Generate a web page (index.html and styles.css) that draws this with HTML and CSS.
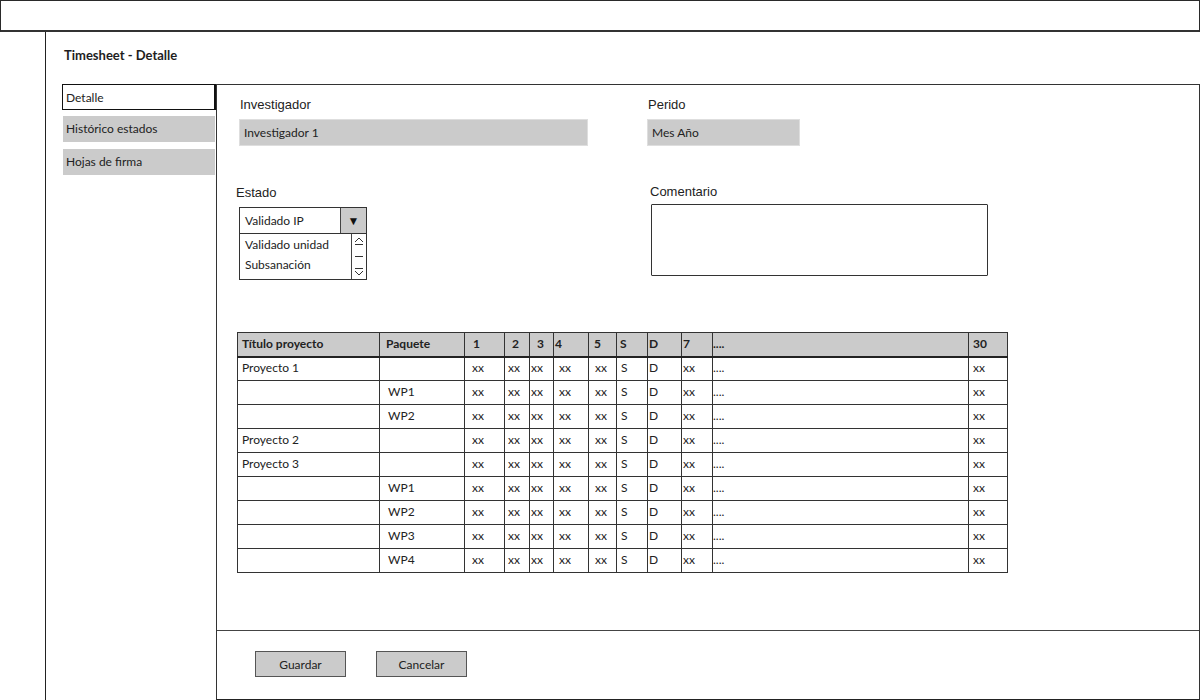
FILE: index.html
```html
<!DOCTYPE html>
<html lang="es">
<head>
<meta charset="utf-8">
<title>Timesheet - Detalle</title>
<link rel="stylesheet" href="styles.css">
</head>
<body>
<header class="topbar"></header>
<div class="page">
  <aside class="rail"></aside>
  <main class="content">
    <h1 class="title">Timesheet - Detalle</h1>
    <div class="workspace">
      <nav class="tabs">
        <div class="tab tab-active">Detalle</div>
        <div class="tab tab-second">Histórico estados</div>
        <div class="tab tab-third">Hojas de firma</div>
      </nav>
      <section class="panel">
        <div class="panel-body">
          <div class="form">
            <div class="field field-inv">
              <label class="lbl">Investigador</label>
              <div class="input input-inv">Investigador 1</div>
            </div>
            <div class="field field-per">
              <label class="lbl">Perido</label>
              <div class="input input-per">Mes Año</div>
            </div>
            <div class="field field-est">
              <label class="lbl lbl-est">Estado</label>
              <div class="combo">
                <div class="combo-head">
                  <span class="combo-value">Validado IP</span>
                  <span class="combo-btn">&#9660;</span>
                </div>
                <div class="combo-list">
                  <div class="combo-items">
                    <div class="combo-item">Validado unidad</div>
                    <div class="combo-item">Subsanación</div>
                  </div>
                  <div class="combo-scroll">
                    <svg width="14" height="44" viewBox="0 0 14 44">
                      <path d="M3 8 L7 4 L11 8" fill="none" stroke="#333" stroke-width="1"/>
                      <path d="M3 10.5 H11" stroke="#333" stroke-width="1"/>
                      <path d="M3 22.5 H11" stroke="#333" stroke-width="1"/>
                      <path d="M3 34.5 H11" stroke="#333" stroke-width="1"/>
                      <path d="M3 37 L7 41 L11 37" fill="none" stroke="#333" stroke-width="1"/>
                    </svg>
                  </div>
                </div>
              </div>
            </div>
            <div class="field field-com">
              <label class="lbl lbl-com">Comentario</label>
              <div class="textarea"></div>
            </div>
          </div>
          <table class="grid">
            <thead>
              <tr><th>Título proyecto</th><th>Paquete</th><th>1</th><th>2</th><th>3</th><th>4</th><th>5</th><th>S</th><th>D</th><th>7</th><th>....</th><th>30</th></tr>
            </thead>
            <tbody>
              <tr><td>Proyecto 1</td><td></td><td>xx</td><td>xx</td><td>xx</td><td>xx</td><td>xx</td><td>S</td><td>D</td><td>xx</td><td>....</td><td>xx</td></tr>
              <tr><td></td><td>WP1</td><td>xx</td><td>xx</td><td>xx</td><td>xx</td><td>xx</td><td>S</td><td>D</td><td>xx</td><td>....</td><td>xx</td></tr>
              <tr><td></td><td>WP2</td><td>xx</td><td>xx</td><td>xx</td><td>xx</td><td>xx</td><td>S</td><td>D</td><td>xx</td><td>....</td><td>xx</td></tr>
              <tr><td>Proyecto 2</td><td></td><td>xx</td><td>xx</td><td>xx</td><td>xx</td><td>xx</td><td>S</td><td>D</td><td>xx</td><td>....</td><td>xx</td></tr>
              <tr><td>Proyecto 3</td><td></td><td>xx</td><td>xx</td><td>xx</td><td>xx</td><td>xx</td><td>S</td><td>D</td><td>xx</td><td>....</td><td>xx</td></tr>
              <tr><td></td><td>WP1</td><td>xx</td><td>xx</td><td>xx</td><td>xx</td><td>xx</td><td>S</td><td>D</td><td>xx</td><td>....</td><td>xx</td></tr>
              <tr><td></td><td>WP2</td><td>xx</td><td>xx</td><td>xx</td><td>xx</td><td>xx</td><td>S</td><td>D</td><td>xx</td><td>....</td><td>xx</td></tr>
              <tr><td></td><td>WP3</td><td>xx</td><td>xx</td><td>xx</td><td>xx</td><td>xx</td><td>S</td><td>D</td><td>xx</td><td>....</td><td>xx</td></tr>
              <tr><td></td><td>WP4</td><td>xx</td><td>xx</td><td>xx</td><td>xx</td><td>xx</td><td>S</td><td>D</td><td>xx</td><td>....</td><td>xx</td></tr>
            </tbody>
          </table>
        </div>
        <footer class="panel-footer">
          <button class="btn" type="button">Guardar</button>
          <button class="btn" type="button">Cancelar</button>
        </footer>
      </section>
    </div>
  </main>
</div>
</body>
</html>
```
FILE: styles.css
```css
* { box-sizing: border-box; }
html, body { margin: 0; padding: 0; }
body {
  width: 1200px;
  height: 700px;
  overflow: hidden;
  background: #fff;
  color: #222;
  font-family: Lato, "Liberation Sans", sans-serif;
}

.topbar {
  height: 32px;
  border: 1px solid #2a2a2a;
  border-bottom: 2px solid #333;
}

.page {
  display: flex;
  height: 668px;
}

.rail {
  width: 46px;
  flex: none;
  border-right: 1px solid #222;
}

.content {
  flex: 1;
  display: flex;
  flex-direction: column;
  padding-top: 15px;
}

.title {
  margin: 0 0 21px 18px;
  font-size: 13px;
  line-height: 16px;
  font-weight: 700;
  color: #1e1e1e;
}

.workspace {
  flex: 1;
  display: flex;
  margin-left: 16px;
}

.tabs {
  width: 154px;
  flex: none;
  display: flex;
  flex-direction: column;
}

.tab {
  height: 26px;
  font-size: 12px;
  line-height: 25px;
  padding-left: 3px;
  flex: none;
}
.tab-active {
  border: 1px solid #111;
  border-right: 2px solid #111;
  background: #fff;
}
.tab-second,
.tab-third {
  background: #cbcbcb;
  margin-left: 1px;
  width: 152px;
  padding-left: 3px;
  line-height: 26px;
}
.tab-second { margin-top: 6px; }
.tab-third { margin-top: 7px; }

.panel {
  flex: 1;
  display: flex;
  flex-direction: column;
  border: 1px solid #333;
  border-bottom: 1px solid #222;
}

.panel-body {
  flex: 1;
  padding: 0 0 0 20px;
}

.form {
  display: grid;
  grid-template-columns: 408px 1fr;
  grid-template-rows: 61px auto;
  padding-top: 12px;
  padding-left: 2px;
}

.field {
  display: flex;
  flex-direction: column;
  align-items: flex-start;
}
.field > * { flex: none; }

.lbl {
  font-family: "Liberation Sans", Arial, sans-serif;
  font-size: 13px;
  line-height: 15px;
  color: #222;
  padding-left: 1px;
}

.input {
  margin-top: 7px;
  height: 27px;
  background: #cbcbcb;
  border: 1px solid #dedede;
  font-size: 12px;
  line-height: 25px;
  padding-left: 4px;
  color: #222;
}
.input-inv { width: 349px; }
.input-per { width: 153px; }

.field-est { padding-top: 27px; }
.lbl-est { margin-left: -3px; padding-left: 0; }

.combo {
  margin-top: 7px;
  width: 128px;
}
.combo-head {
  display: flex;
  height: 27px;
  border: 1px solid #333;
}
.combo-value {
  flex: 1;
  font-size: 12px;
  line-height: 25px;
  padding-left: 5px;
}
.combo-btn {
  width: 26px;
  background: #cbcbcb;
  border-left: 1px solid #444;
  text-align: center;
  font-size: 12px;
  line-height: 25px;
  color: #111;
}
.combo-list {
  display: flex;
  height: 46px;
  border: 1px solid #333;
  border-top: none;
}
.combo-items {
  flex: 1;
  padding-top: 1px;
}
.combo-item {
  font-size: 12px;
  line-height: 20px;
  padding-left: 5px;
}
.combo-scroll {
  width: 15px;
  border-left: 1px solid #444;
  display: flex;
}

.field-com { padding-top: 26px; }
.lbl-com { margin-left: 2px; }
.textarea {
  margin-top: 5px;
  margin-left: 4px;
  width: 337px;
  height: 72px;
  border: 1px solid #333;
  border-radius: 1px;
}

.grid {
  margin-top: 52px;
  border-collapse: collapse;
  table-layout: fixed;
  width: 771px;
  border: 1px solid #222;
  font-size: 12px;
  color: #222;
}
.grid th,
.grid td {
  height: 24px;
  border: 1px solid #333;
  text-align: left;
  padding: 0 0 2px 4px;
  white-space: nowrap;
  overflow: hidden;
}
.grid thead th {
  background: #cbcbcb;
  font-weight: 700;
  border-bottom: 2px solid #222;
}
.grid th:nth-child(1), .grid td:nth-child(1) { width: 142px; }
.grid th:nth-child(2), .grid td:nth-child(2) { width: 85px; }
.grid th:nth-child(3), .grid td:nth-child(3) { width: 40px; }
.grid th:nth-child(4), .grid td:nth-child(4) { width: 25px; }
.grid th:nth-child(5), .grid td:nth-child(5) { width: 24px; }
.grid th:nth-child(6), .grid td:nth-child(6) { width: 35px; }
.grid th:nth-child(7), .grid td:nth-child(7) { width: 28px; }
.grid th:nth-child(8), .grid td:nth-child(8) { width: 31px; }
.grid th:nth-child(9), .grid td:nth-child(9) { width: 34px; }
.grid th:nth-child(10), .grid td:nth-child(10) { width: 31px; }
.grid th:nth-child(11), .grid td:nth-child(11) { width: 256px; }
.grid th:nth-child(12), .grid td:nth-child(12) { width: 39px; }

.grid th:nth-child(2) { padding-left: 6px; }
.grid th:nth-child(3) { padding-left: 8px; }
.grid th:nth-child(4) { padding-left: 7px; }
.grid th:nth-child(5) { padding-left: 7px; }
.grid th:nth-child(6) { padding-left: 1px; }
.grid th:nth-child(7) { padding-left: 5px; }
.grid th:nth-child(8) { padding-left: 3px; }
.grid th:nth-child(9) { padding-left: 1px; }
.grid th:nth-child(10) { padding-left: 1px; }
.grid th:nth-child(11) { padding-left: 0; }
.grid th:nth-child(12) { padding-left: 4px; }

.grid td:nth-child(2) { padding-left: 8px; }
.grid td:nth-child(3) { padding-left: 7px; }
.grid td:nth-child(4) { padding-left: 3px; }
.grid td:nth-child(5) { padding-left: 1px; }
.grid td:nth-child(6) { padding-left: 5px; }
.grid td:nth-child(7) { padding-left: 6px; }
.grid td:nth-child(8) { padding-left: 4px; }
.grid td:nth-child(9) { padding-left: 1px; }
.grid td:nth-child(10) { padding-left: 1px; }
.grid td:nth-child(11) { padding-left: 0; }
.grid td:nth-child(12) { padding-left: 4px; }

.panel-footer {
  height: 69px;
  flex: none;
  border-top: 1px solid #444;
  display: flex;
  align-items: flex-start;
  gap: 30px;
  padding: 20px 0 0 38px;
}

.btn {
  width: 91px;
  height: 26px;
  background: #cbcbcb;
  border: 1px solid #555;
  border-radius: 0;
  font-family: Lato, "Liberation Sans", sans-serif;
  font-size: 12px;
  color: #222;
  padding: 0;
  margin: 0;
}
```
